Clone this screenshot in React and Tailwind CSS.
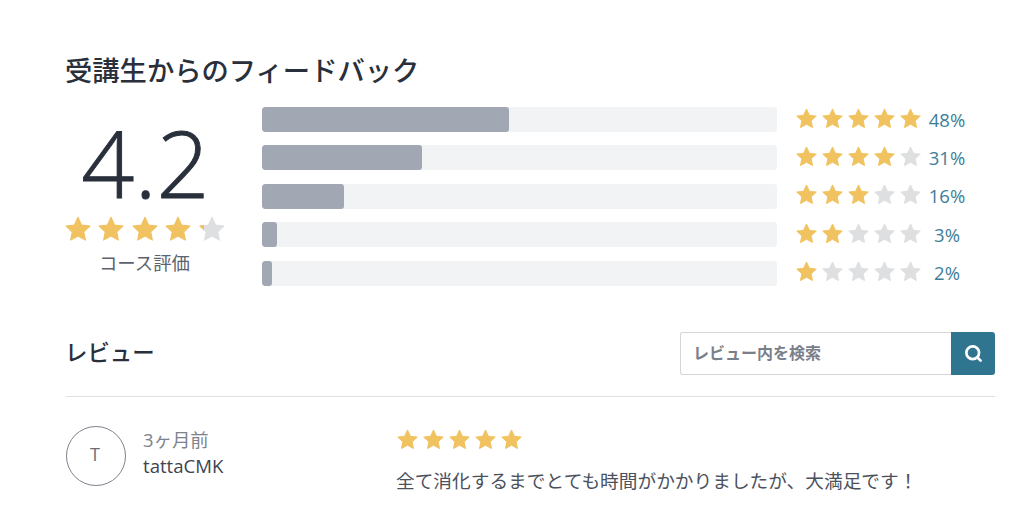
import React from 'react';
import { Search } from 'lucide-react';

const starPath =
  'M12 2l3 6.6 7.2 .9-5.3 4.9 1.4 7.1L12 18l-6.3 3.5 1.4-7.1L1.800 9.500 9 8.600z';

const Star = ({ size, color }) => (
  <svg width={size} height={size} viewBox="0 0 24 24" className="shrink-0">
    <path d={starPath} fill={color} stroke={color} strokeWidth="1" strokeLinejoin="round" />
  </svg>
);

const GOLD = '#f0c260';
const GREY = '#dedfe0';

const Stars = ({ filled, size = 24, className = 'gap-[2px]' }) => (
  <div className={`flex ${className}`}>
    {[0, 1, 2, 3, 4].map((i) => (
      <Star key={i} size={size} color={i < filled ? GOLD : GREY} />
    ))}
  </div>
);

const rows = [
  { pct: 48, width: 48, stars: 5 },
  { pct: 31, width: 31, stars: 4 },
  { pct: 16, width: 16, stars: 3 },
  { pct: 3, width: 3, stars: 2 },
  { pct: 2, width: 2, stars: 1 },
];

export default function App() {
  return (
    <div
      className="w-[1024px] h-[505px] overflow-hidden bg-white text-[#29303b] pl-[66px] pr-[29px] pt-[52px]"
      style={{ fontFamily: '"Open Sans", "Noto Sans CJK JP", sans-serif' }}
    >
      <h2 className="text-[27.3px] leading-[38px] font-medium whitespace-nowrap -ml-px">受講生からのフィードバック</h2>

      <div className="flex mt-[17px]">
        {/* Course rating */}
        <div className="w-[196px] shrink-0 flex flex-col">
          <div className="w-[159px] flex flex-col items-center">
            <div className="text-[93px] leading-[92px] font-light [-webkit-text-stroke:0.9px_#29303b] mt-[9px]">4.2</div>
            <div className="flex gap-[5.5px] mt-[7px] -ml-[2px]">
              <Star size={28} color={GOLD} />
              <Star size={28} color={GOLD} />
              <Star size={28} color={GOLD} />
              <Star size={28} color={GOLD} />
              <div className="relative w-[28px] h-[28px]">
                <Star size={28} color={GREY} />
                <div className="absolute inset-0 w-[6px] overflow-hidden">
                  <Star size={28} color={GOLD} />
                </div>
              </div>
            </div>
            <div className="text-[18.4px] leading-[26px] text-[#5c636e] mt-[7px] -ml-[2px] whitespace-nowrap">コース評価</div>
          </div>
        </div>

        {/* Breakdown bars */}
        <div className="flex flex-col gap-[13.4px]">
          {rows.map((r) => (
            <div key={r.pct} className="flex items-center h-[25px]">
              <div className="w-[515px] h-[25px] rounded-[3px] bg-[#f2f3f5] overflow-hidden">
                <div className="h-full rounded-[3px] bg-[#a1a7b3]" style={{ width: `${r.width}%` }} />
              </div>
              <div className="ml-[18px] mt-[-3px]">
                <Stars filled={r.stars} size={23} className="gap-[3px]" />
              </div>
              <div className="w-[48px] ml-[1px] -mt-px text-center text-[18.500px] leading-[25px] text-[#3d7e99]">{r.pct}%</div>
            </div>
          ))}
        </div>
      </div>

      <div className="flex items-center justify-between mt-[46px] pb-[21px] border-b border-[#dedfe0]">
        <h3 className="text-[22.400px] leading-[30px] font-medium -ml-px">レビュー</h3>
        <div className="flex h-[43px] w-[315px]">
          <div className="flex-1 flex items-center pl-[12px] border-[1.5px] border-[#d5d6d8] border-r-0 rounded-l-[3px] text-[16px] font-semibold text-[#7a808a]">
            レビュー内を検索
          </div>
          <div className="w-[44px] flex items-center justify-center bg-[#2f758f] rounded-r-[3px]">
            <Search size={19} strokeWidth={3.4} className="text-white" />
          </div>
        </div>
      </div>

      <div className="flex mt-[29px]">
        <div className="w-[60px] h-[60px] rounded-full border border-[#7d828c] flex items-center justify-center text-[18px] text-[#686f7a] shrink-0">
          <span className="-ml-[2px] -mt-[2px]">T</span>
        </div>
        <div className="w-[254px] ml-[17px] shrink-0">
          <div className="text-[18.4px] leading-[26px] text-[#7d828c] whitespace-nowrap mt-[1px]">3ヶ月前</div>
          <div className="text-[18.6px] leading-[26px] text-[#3e4450]">tattaCMK</div>
        </div>
        <div className="-ml-px">
          <div className="mt-[2px]">
            <Stars filled={5} size={23} className="gap-[3px]" />
          </div>
          <p className="text-[18.7px] leading-[26px] text-[#4b515c] mt-[17px] whitespace-nowrap">
            全て消化するまでとても時間がかかりましたが、大満足です！
          </p>
        </div>
      </div>
    </div>
  );
}
